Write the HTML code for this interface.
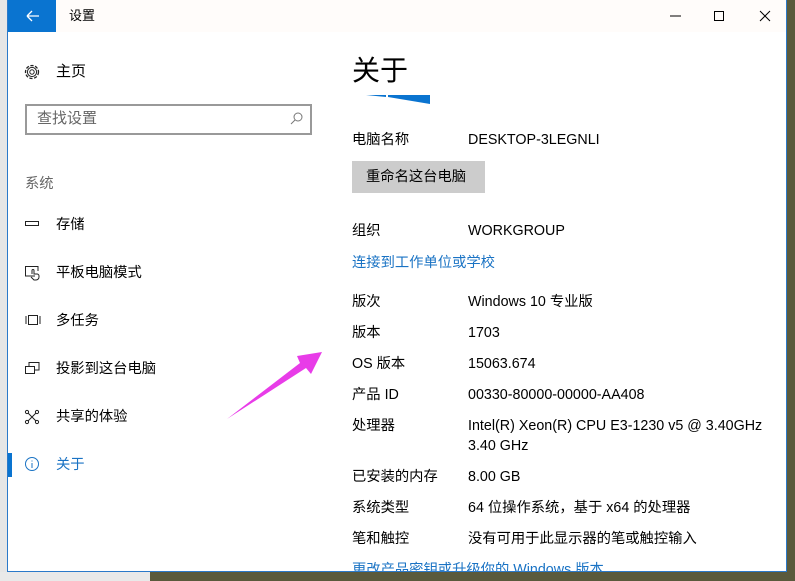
<!DOCTYPE html><html><head><meta charset="utf-8"><style>
body{margin:0;width:795px;height:581px;overflow:hidden;background:#5a5a3c;font-family:"Liberation Sans","Noto Sans CJK SC",sans-serif;position:relative}
.lft{position:absolute;left:0;top:0;width:8px;height:581px;background:#e6e6e6}
.desk{position:absolute;left:0;top:572px;width:150px;height:9px;background:#e9e9e9}
.win{position:absolute;left:7px;top:0;width:778px;height:571px;background:#fff;border:1px solid #2b79c9;border-top:none;overflow:hidden}
.t{position:absolute;white-space:nowrap;font-size:14.3px;color:#000;line-height:18px}
.g{color:#555}
.l{color:#1a73c4}
</style></head><body>
<div class="lft"></div>
<div class="desk"></div>
<div class="win">
<div style="position:absolute;left:0;top:0;width:778px;height:32px;background:#fffcfa"></div>
<div style="position:absolute;left:0;top:0;width:48px;height:32px;background:#0a74d0"></div>
<svg style="position:absolute;left:17px;top:8px" width="16" height="16"><path d="M2 8H14M2 8L7 3M2 8L7 13" stroke="#fff" stroke-width="1.3" fill="none"/></svg>
<div class="t" style="left:61px;top:7px;font-size:13px">设置</div>
<svg style="position:absolute;left:658px;top:8px" width="120" height="16"><path d="M4 8H15" stroke="#000"/><rect x="48.5" y="3.5" width="9" height="9" stroke="#000" fill="none"/><path d="M94 3L104 13M104 3L94 13" stroke="#000"/></svg>
<svg style="position:absolute;left:15px;top:63px" width="18" height="18"><circle cx="9" cy="9" r="6.5" stroke="#222" stroke-width="1.3" fill="none" stroke-dasharray="3.2 1.6"/><circle cx="9" cy="9" r="4.6" stroke="#222" fill="none"/><circle cx="9" cy="9" r="2.2" stroke="#222" fill="none"/></svg>
<div class="t" style="left:48px;top:63px;font-size:15px">主页</div>
<div style="position:absolute;left:17px;top:104px;width:283px;height:27px;border:2px solid #999"></div>
<div class="t g" style="left:29px;top:110px;font-size:15px;color:#666">查找设置</div>
<svg style="position:absolute;left:282px;top:112px" width="14" height="14"><circle cx="8" cy="5" r="4" stroke="#777" fill="none"/><path d="M5 8L1 12" stroke="#777"/></svg>
<div class="t" style="left:17px;top:175px;color:#666">系统</div>
<svg style="position:absolute;left:16px;top:219px" width="16" height="10"><rect x="1.5" y="2.5" width="13" height="4" stroke="#222" fill="none"/></svg>
<div class="t" style="left:48px;top:216px">存储</div>
<svg style="position:absolute;left:16px;top:265px" width="18" height="16"><path d="M11 11H1.5V1.5H14V6" stroke="#222" fill="none"/><path d="M8 9V5.5a1 1 0 0 1 2 0V9h3a2 2 0 0 1 2 2v1a3 3 0 0 1-3 3h-2l-3-3" stroke="#222" fill="none"/></svg>
<div class="t" style="left:48px;top:264px">平板电脑模式</div>
<svg style="position:absolute;left:16px;top:314px" width="18" height="12"><rect x="4.5" y="1.5" width="9" height="9" stroke="#222" fill="none"/><path d="M2 2V10M16 2V10" stroke="#222"/></svg>
<div class="t" style="left:48px;top:312px">多任务</div>
<svg style="position:absolute;left:16px;top:361px" width="18" height="14"><path d="M5 5V1.5H15V9H11M1.5 5.5H10.5V12.5H1.5Z" stroke="#222" fill="none"/></svg>
<div class="t" style="left:48px;top:360px">投影到这台电脑</div>
<svg style="position:absolute;left:16px;top:409px" width="16" height="16"><path d="M3 3L13 13M13 3L3 13" stroke="#222"/><circle cx="3" cy="3" r="1.6" fill="#fff" stroke="#222"/><circle cx="13" cy="3" r="1.6" fill="#fff" stroke="#222"/><circle cx="3" cy="13" r="1.6" fill="#fff" stroke="#222"/><circle cx="13" cy="13" r="1.6" fill="#fff" stroke="#222"/></svg>
<div class="t" style="left:48px;top:408px">共享的体验</div>
<div style="position:absolute;left:0;top:453px;width:4px;height:24px;background:#0a74d0"></div>
<svg style="position:absolute;left:16px;top:456px" width="16" height="16"><circle cx="8" cy="8" r="6.5" stroke="#1a73c4" fill="none"/><path d="M8 7V12M8 4.5V5.5" stroke="#1a73c4"/></svg>
<div class="t l" style="left:48px;top:456px">关于</div>

<div class="t" style="left:344px;top:54px;font-size:28px;line-height:34px">关于</div>
<svg style="position:absolute;left:358px;top:94px" width="66" height="12"><path d="M0 1L20 1L20 3Z" fill="#0a74d0"/><path d="M22 1L64 1L64 10L22 3Z" fill="#0a74d0"/></svg>
<div class="t" style="left:344px;top:131px">电脑名称</div><div class="t" style="left:460px;top:131px">DESKTOP-3LEGNLI</div>
<div style="position:absolute;left:344px;top:161px;width:133px;height:32px;background:#ccc"></div>
<div class="t" style="left:358px;top:168px">重命名这台电脑</div>
<div class="t" style="left:344px;top:222px">组织</div><div class="t" style="left:460px;top:222px">WORKGROUP</div>
<div class="t l" style="left:344px;top:254px">连接到工作单位或学校</div>
<div class="t" style="left:344px;top:293px">版次</div><div class="t" style="left:460px;top:293px">Windows 10 专业版</div>
<div class="t" style="left:344px;top:324px">版本</div><div class="t" style="left:460px;top:324px">1703</div>
<div class="t" style="left:344px;top:355px">OS 版本</div><div class="t" style="left:460px;top:355px">15063.674</div>
<div class="t" style="left:344px;top:386px">产品 ID</div><div class="t" style="left:460px;top:386px">00330-80000-00000-AA408</div>
<div class="t" style="left:344px;top:417px">处理器</div><div class="t" style="left:460px;top:417px">Intel(R) Xeon(R) CPU E3-1230 v5 @ 3.40GHz</div>
<div class="t" style="left:460px;top:437px">3.40 GHz</div>
<div class="t" style="left:344px;top:468px">已安装的内存</div><div class="t" style="left:460px;top:468px">8.00 GB</div>
<div class="t" style="left:344px;top:499px">系统类型</div><div class="t" style="left:460px;top:499px">64 位操作系统，基于 x64 的处理器</div>
<div class="t" style="left:344px;top:530px">笔和触控</div><div class="t" style="left:460px;top:530px">没有可用于此显示器的笔或触控输入</div>
<div class="t l" style="left:344px;top:561px">更改产品密钥或升级你的 Windows 版本</div>
</div>
<svg style="position:absolute;left:0;top:0" width="795" height="581"><path d="M227 419L300 363L297 356L322 352L311 374L306 368Z" fill="#e83ce8"/></svg>
</body></html>
